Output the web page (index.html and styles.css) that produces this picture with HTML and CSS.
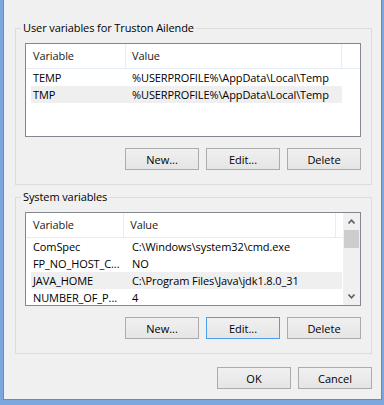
FILE: index.html
```html
<!DOCTYPE html>
<html lang="en">
<head>
    <meta charset="UTF-8">
    <title>Environment Variables</title>
    <link rel="stylesheet" href="styles.css">
</head>
<body>
<div class="frame">
    <div class="client">
        <fieldset class="group">
            <legend>User variables for Truston Ailende</legend>
            <div class="listview">
                <div class="lv-body">
                    <div class="lv-header">
                        <span class="hcol hcol-name">Variable</span>
                        <span class="hcol hcol-value">Value</span>
                        <span class="hcol hcol-rest"></span>
                    </div>
                    <div class="lv-row"><span class="cell-name">TEMP</span><span class="cell-value">%USERPROFILE%\AppData\Local\Temp</span></div>
                    <div class="lv-row selected"><span class="cell-name">TMP</span><span class="cell-value">%USERPROFILE%\AppData\Local\Temp</span></div>
                </div>
            </div>
            <div class="button-row">
                <button class="btn">New...</button>
                <button class="btn">Edit...</button>
                <button class="btn">Delete</button>
            </div>
        </fieldset>

        <fieldset class="group">
            <legend>System variables</legend>
            <div class="listview">
                <div class="lv-body">
                    <div class="lv-header">
                        <span class="hcol hcol-name">Variable</span>
                        <span class="hcol hcol-value">Value</span>
                        <span class="hcol hcol-rest"></span>
                    </div>
                    <div class="lv-row"><span class="cell-name">ComSpec</span><span class="cell-value">C:\Windows\system32\cmd.exe</span></div>
                    <div class="lv-row"><span class="cell-name">FP_NO_HOST_C...</span><span class="cell-value">NO</span></div>
                    <div class="lv-row selected"><span class="cell-name">JAVA_HOME</span><span class="cell-value">C:\Program Files\Java\jdk1.8.0_31</span></div>
                    <div class="lv-row"><span class="cell-name">NUMBER_OF_P...</span><span class="cell-value">4</span></div>
                </div>
                <div class="scrollbar">
                    <div class="sb-arrow">
                        <svg width="7" height="5" viewBox="0 0 7 5"><polyline points="0.5,4.5 3.5,1.2 6.5,4.5" fill="none" stroke="#606060" stroke-width="1.6"/></svg>
                    </div>
                    <div class="sb-track"><div class="sb-thumb"></div></div>
                    <div class="sb-arrow">
                        <svg width="7" height="5" viewBox="0 0 7 5"><polyline points="0.5,0.5 3.5,3.8 6.5,0.5" fill="none" stroke="#606060" stroke-width="1.6"/></svg>
                    </div>
                </div>
            </div>
            <div class="button-row">
                <button class="btn">New...</button>
                <button class="btn default">Edit...</button>
                <button class="btn">Delete</button>
            </div>
        </fieldset>

        <div class="dialog-buttons">
            <button class="btn">OK</button>
            <button class="btn">Cancel</button>
        </div>
    </div>
</div>
</body>
</html>
```

FILE: styles.css
```css
body {
    margin: 0;
    font-family: "Open Sans", "Noto Sans", sans-serif;
    font-size: 11px;
    letter-spacing: -0.1px;
    color: #000;
}
.frame {
    width: 384px;
    height: 405px;
    box-sizing: border-box;
    padding: 0 2px 5px 3px;
    background: #7ba7de;
}
.client {
    height: 100%;
    box-sizing: border-box;
    background: #f0f0f0;
    border: 1px solid #5f8cc6;
    border-top: none;
    padding: 20px 9px 0 11px;
}

/* group boxes */
.group {
    margin: 0;
    min-width: 0;
    padding: 7px 10px 14px 9px;
    border: 1px solid #dcdcdc;
}
.group + .group {
    margin-top: 4px;
}
.group legend {
    padding: 0 2px;
    margin-left: -4px;
    line-height: 16px;
}

/* list views */
.listview {
    display: flex;
    height: 94px;
    box-sizing: border-box;
    border: 1px solid #828790;
    background: #fff;
    overflow: hidden;
}
.lv-body {
    flex: 1;
    min-width: 0;
}
.lv-header {
    display: flex;
    height: 24px;
    border-bottom: 1px solid #e5edf6;
}
.hcol {
    box-sizing: border-box;
    line-height: 24px;
    padding-left: 7px;
    border-right: 1px solid #e5edf6;
    color: #1a1a1a;
}
.hcol-name {
    width: 100px;
}
.hcol-value {
    width: 216px;
    padding-left: 6px;
}
.hcol-rest {
    flex: 1;
    border-right: none;
}
.lv-row {
    display: flex;
    width: 311px;
    height: 17px;
    line-height: 17px;
    margin-left: 5px;
    white-space: nowrap;
}
.lv-row.selected {
    background: #efefef;
}
.cell-name {
    box-sizing: border-box;
    width: 95px;
    padding-left: 2px;
}
.cell-value {
    padding-left: 6px;
}

/* scrollbar */
.scrollbar {
    display: flex;
    flex-direction: column;
    width: 17px;
    background: #f0f0f0;
}
.sb-arrow {
    display: flex;
    align-items: center;
    justify-content: center;
    height: 17px;
}
.sb-arrow svg {
    display: block;
}
.sb-track {
    flex: 1;
}
.sb-thumb {
    width: 15px;
    height: 18px;
    margin-left: 1px;
    background: #cdcdcd;
}

/* buttons */
.button-row,
.dialog-buttons {
    display: flex;
    justify-content: flex-end;
    gap: 7px;
}
.button-row {
    margin-top: 11px;
}
.dialog-buttons {
    margin-top: 13px;
}
.btn {
    width: 74px;
    height: 22px;
    padding: 0;
    border: 1px solid #acacac;
    background: linear-gradient(#f0f0f0, #e5e5e5);
    font: inherit;
    color: #000;
}
.btn.default {
    border-color: #4aa0ee;
}
```
